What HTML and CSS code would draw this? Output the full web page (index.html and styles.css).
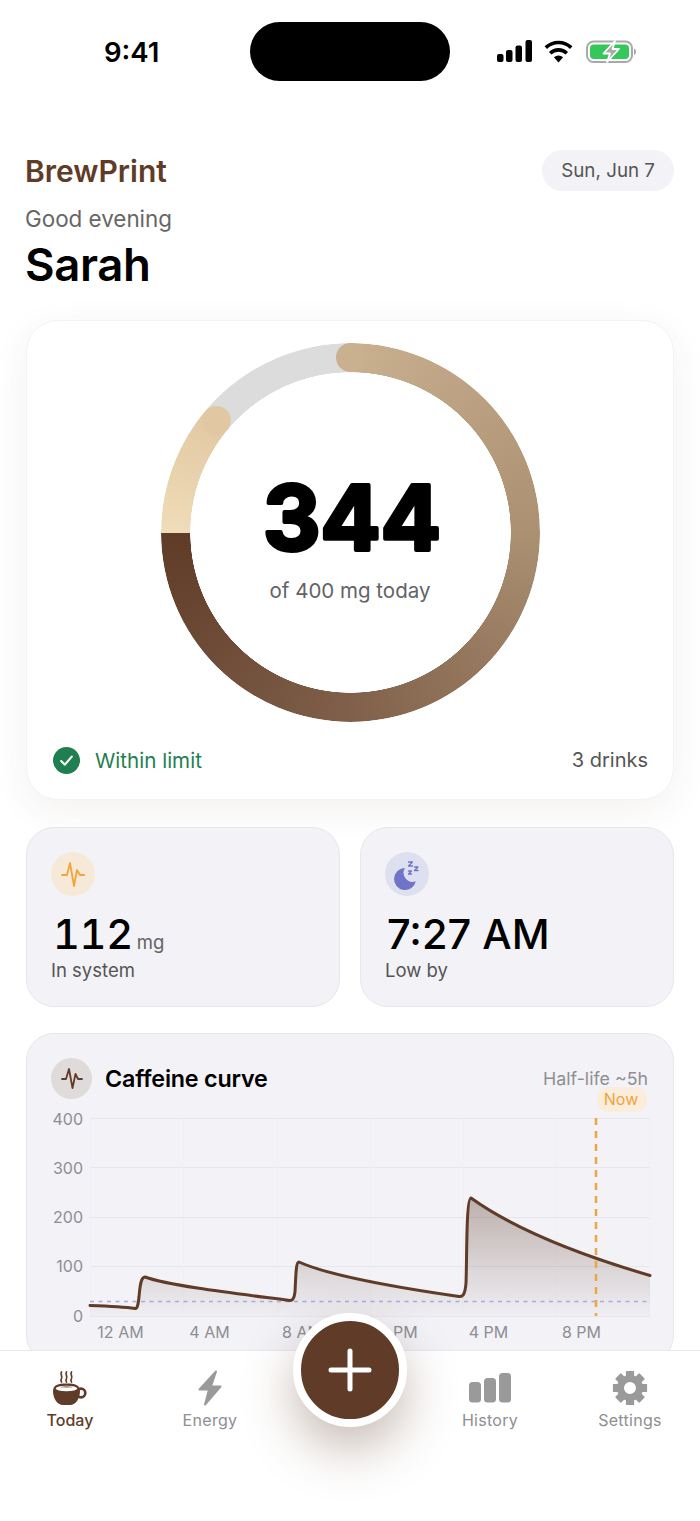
FILE: index.html
```html
<!DOCTYPE html>
<html lang="en">
<head>
<meta charset="utf-8">
<title>BrewPrint</title>
<link rel="stylesheet" href="styles.css">
</head>
<body>
<div class="phone">
  <main class="screen">
    <div class="status">
      <span class="time">9:41</span>
      <span class="island"></span>
      <svg class="status-icons" width="140" height="24" viewBox="496 40 140 24">
        <g fill="#000">
          <rect x="497" y="54" width="6.5" height="8" rx="2"/>
          <rect x="506" y="50" width="6.5" height="12" rx="2"/>
          <rect x="515.5" y="45.5" width="6.5" height="16.5" rx="2"/>
          <rect x="525.5" y="40" width="6.5" height="22" rx="2"/>
          <path d="M558.5 62.5l-4.6-5.2a7 7 0 0 1 9.2 0z"/>
        </g>
        <g fill="none" stroke="#000" stroke-width="3.6">
          <path d="M550.2 53.2a12 12 0 0 1 16.6 0"/>
          <path d="M545.8 47.6a18.4 18.4 0 0 1 25.4 0"/>
        </g>
        <rect x="587" y="41.5" width="45" height="20.5" rx="6.5" fill="#fff" stroke="#a9a9a9" stroke-width="2"/>
        <rect x="590" y="44.5" width="39" height="14.5" rx="4" fill="#34c759"/>
        <path d="M634 48.5c1.6.4 2 1.700 2 3.200s-.4 2.800-2 3.200z" fill="#a9a9a9"/>
        <path d="M615 41l-11.500 12.500h6.500l-3 8.500 12-13h-6.500z" fill="#a9a9a9" stroke="#fff" stroke-width="1.800" stroke-linejoin="round"/>
      </svg>
    </div>

    <header class="top">
      <div class="top-row">
        <span class="brand">BrewPrint</span>
        <span class="date">Sun, Jun 7</span>
      </div>
      <p class="greet">Good evening</p>
      <h1 class="name">Sarah</h1>
    </header>

    <section class="card hero">
      <div class="ring-wrap">
        <div class="ring"></div>
        <span class="cap cap-tan"></span>
        <span class="cap cap-cream"></span>
        <div class="ring-center">
          <svg class="total-svg" width="240" height="100" viewBox="0 0 240 100">
            <text class="total" x="122" y="82" text-anchor="middle">344</text>
          </svg>
          <span class="total-sub">of 400 mg today</span>
        </div>
      </div>
      <div class="hero-foot">
        <span class="limit">
          <svg class="check" width="27" height="27" viewBox="0 0 28 28">
            <circle cx="14" cy="14" r="14" fill="#1f7f50"/>
            <path d="M8.500 14.500l3.800 3.800 7.200-8.300" fill="none" stroke="#fff" stroke-width="2.200" stroke-linecap="round" stroke-linejoin="round"/>
          </svg>
          Within limit
        </span>
        <span class="drinks">3 drinks</span>
      </div>
    </section>

    <section class="stats">
      <article class="stat">
        <span class="badge badge-orange">
          <svg width="44" height="44" viewBox="51 852 44 44">
            <path d="M62 875h5l3-12 4 23 3-16 3 5h4" fill="none" stroke="#f2a33a" stroke-width="1.800" stroke-linecap="round" stroke-linejoin="round"/>
          </svg>
        </span>
        <div class="value value-num">112<small class="unit">mg</small></div>
        <div class="label">In system</div>
      </article>
      <article class="stat">
        <span class="badge badge-indigo">
          <svg width="44" height="44" viewBox="385 852 44 44">
            <path d="M405 868a11 11 0 1 0 10.800 13.200a9 9 0 0 1-10.800-13.200z" fill="#6f74c7"/>
            <path d="M408.500 862h4l-4 4h4M414.500 867h3.500l-3.500 3.500h3.500M408.500 871h3l-3 3h3" fill="none" stroke="#6f74c7" stroke-width="1.300" stroke-linecap="round" stroke-linejoin="round"/>
          </svg>
        </span>
        <div class="value">7:27 AM</div>
        <div class="label">Low by</div>
      </article>
    </section>

    <section class="chart-card">
      <div class="chart-head">
        <span class="badge-small">
          <svg width="41" height="41" viewBox="51 1058 41 41">
            <path d="M62 1079h4l3-10 3.500 19 3-14 2.500 5h4" fill="none" stroke="#5f3b28" stroke-width="1.800" stroke-linecap="round" stroke-linejoin="round"/>
          </svg>
        </span>
        <span class="chart-title">Caffeine curve</span>
        <span class="half">Half-life ~5h</span>
      </div>
      <svg class="chart" width="646" height="252" viewBox="27 1100 646 252">
        <defs>
          <linearGradient id="area" gradientUnits="userSpaceOnUse" x1="0" y1="1198" x2="0" y2="1316">
            <stop offset="0" stop-color="#5f3b28" stop-opacity=".36"/>
            <stop offset="1" stop-color="#5f3b28" stop-opacity=".02"/>
          </linearGradient>
        </defs>
        <g stroke="#e6e6ec" stroke-width="1">
          <path d="M90 1118.500H650M90 1167.500H650M90 1217.500H650M90 1266.500H650M90 1316.500H650"/>
        </g>
        <g stroke="#ececf1" stroke-width="1" stroke-dasharray="2 2">
          <path d="M90.500 1118V1316M183.500 1118V1316M277.500 1118V1316M370.500 1118V1316M463.500 1118V1316M556.500 1118V1316M649.500 1118V1316"/>
        </g>
        <path d="M90 1305.500C105 1306 125 1307 135 1308.500C137 1309 138 1306 139 1297C140 1285 141 1277 145 1277C170 1286 240 1294 290 1300.500C292 1300.500 294 1300 295 1292C296 1272 296 1262 299 1262C330 1276 400 1288 459 1296.500C462 1297 465 1296 466 1283C467 1260 466 1198 471 1198C510 1226 570 1252 650 1275.500V1316H90Z" fill="url(#area)"/>
        <path d="M90 1301.500H650" stroke="#aca7e2" stroke-width="1.500" stroke-dasharray="4 4.500" fill="none"/>
        <path d="M90 1305.500C105 1306 125 1307 135 1308.500C137 1309 138 1306 139 1297C140 1285 141 1277 145 1277C170 1286 240 1294 290 1300.500C292 1300.500 294 1300 295 1292C296 1272 296 1262 299 1262C330 1276 400 1288 459 1296.500C462 1297 465 1296 466 1283C467 1260 466 1198 471 1198C510 1226 570 1252 650 1275.500" fill="none" stroke="#5f3b28" stroke-width="3" stroke-linecap="round" stroke-linejoin="round"/>
        <path d="M596 1118V1316" stroke="#f0a540" stroke-width="2.500" stroke-dasharray="7 6" fill="none"/>
        <rect x="597" y="1087" width="50" height="25" rx="11" fill="#fbeddc"/>
        <text class="now" x="621" y="1105" text-anchor="middle">Now</text>
        <g class="axis-y" text-anchor="end">
          <text x="83" y="1124.500">400</text>
          <text x="83" y="1173.500">300</text>
          <text x="83" y="1223">200</text>
          <text x="83" y="1272">100</text>
          <text x="83" y="1321.500">0</text>
        </g>
        <g class="axis-x" text-anchor="middle">
          <text x="120.500" y="1337.500">12 AM</text>
          <text x="209.500" y="1337.500">4 AM</text>
          <text x="302" y="1337.500">8 AM</text>
          <text x="395" y="1337.500">12 PM</text>
          <text x="488.500" y="1337.500">4 PM</text>
          <text x="581.500" y="1337.500">8 PM</text>
        </g>
      </svg>
    </section>
  </main>

  <nav class="tabs">
    <button class="fab" aria-label="Add drink">
      <svg width="44" height="44" viewBox="0 0 44 44"><path d="M22 3V41M3 22H41" stroke="#fff" stroke-width="5" stroke-linecap="round"/></svg>
    </button>
    <div class="tab tab-active">
      <svg width="36" height="36" viewBox="52 1370 36 36">
        <g fill="none" stroke="#5f3b28" stroke-width="1.700" stroke-linecap="round">
          <path d="M61.500 1372c-2 2.500 2 4-.3 7.500c-.6 1 0 2 .3 2.500"/>
          <path d="M66.500 1372c-2 2.500 2 4-.3 7.500c-.6 1 0 2 .3 2.500"/>
          <path d="M71.500 1372c-2 2.500 2 4-.3 7.500c-.6 1 0 2 .3 2.500"/>
        </g>
        <path d="M53 1391C53 1385 58 1383.500 66.500 1383.500C75 1383.500 80 1385 80 1391C80 1398 76 1405 70 1405H63C57 1405 53 1398 53 1391Z" fill="#5f3b28"/>
        <circle cx="81" cy="1393" r="4.300" fill="none" stroke="#5f3b28" stroke-width="2.700"/>
        <ellipse cx="66.500" cy="1388.500" rx="10.800" ry="2.800" fill="#fff"/>
        <path d="M60 1387.500q3-1.500 6.500-1q3.500-.5 6.500 1q-3-.5-6.500 0q-3.500-.5-6.500 0z" fill="#5f3b28"/>
      </svg>
      <span>Today</span>
    </div>
    <div class="tab">
      <svg width="36" height="36" viewBox="192 1370 36 36">
        <path d="M216 1371.500L199.500 1389.500H209L205 1404.500L220.500 1386.500H211Z" fill="#9a9a9a" stroke="#9a9a9a" stroke-width="2" stroke-linejoin="round"/>
      </svg>
      <span>Energy</span>
    </div>
    <div class="tab tab-spacer"></div>
    <div class="tab">
      <svg width="44" height="36" viewBox="468 1370 44 36">
        <rect x="469" y="1382" width="12" height="20.500" rx="3.500" fill="#9a9a9a"/>
        <rect x="484" y="1378" width="12" height="24.500" rx="3.500" fill="#9a9a9a"/>
        <rect x="499" y="1373" width="12" height="29.500" rx="3.500" fill="#9a9a9a"/>
      </svg>
      <span>History</span>
    </div>
    <div class="tab">
      <svg width="36" height="36" viewBox="-18 -18 36 36">
        <g fill="#9a9a9a" stroke="#9a9a9a" stroke-width="1.200" stroke-linejoin="round">
          <rect x="-3.500" y="-16.500" width="7" height="8"/>
          <rect x="-3.500" y="-16.500" width="7" height="8" transform="rotate(45)"/>
          <rect x="-3.500" y="-16.500" width="7" height="8" transform="rotate(90)"/>
          <rect x="-3.500" y="-16.500" width="7" height="8" transform="rotate(135)"/>
          <rect x="-3.500" y="-16.500" width="7" height="8" transform="rotate(180)"/>
          <rect x="-3.500" y="-16.500" width="7" height="8" transform="rotate(225)"/>
          <rect x="-3.500" y="-16.500" width="7" height="8" transform="rotate(270)"/>
          <rect x="-3.500" y="-16.500" width="7" height="8" transform="rotate(315)"/>
        </g>
        <circle r="9.500" fill="none" stroke="#9a9a9a" stroke-width="7"/>
      </svg>
      <span>Settings</span>
    </div>
  </nav>
</div>
</body>
</html>
```

FILE: styles.css
```css
* { box-sizing: border-box; }
html, body { margin: 0; padding: 0; background: #fff; }
body { font-family: "Inter", "Liberation Sans", sans-serif; color: #000; }
.phone { width: 700px; height: 1521px; display: flex; flex-direction: column; overflow: hidden; background: #fff; }
.screen { flex: 1; min-height: 0; overflow: hidden; padding: 0 26px; display: flex; flex-direction: column; }

.status { flex: none; height: 128px; margin: 0 -26px; padding-top: 22px; display: grid; grid-template-columns: 1fr 200px 1fr; align-items: start; }
.time { justify-self: start; margin-left: 104px; margin-top: 13px; font-size: 27.500px; line-height: 34px; font-weight: 600; }
.island { height: 59px; border-radius: 30px; background: #000; }
.status-icons { justify-self: end; margin-top: 18px; margin-right: 64px; }

.top { flex: none; padding-top: 22px; }
.top-row { display: flex; justify-content: space-between; align-items: center; height: 41px; }
.brand { margin-left: -1px; font-size: 30px; font-weight: 600; color: #5f3b28; }
.date { height: 41px; line-height: 41px; padding: 0 19px; border-radius: 21px; background: #f2f2f7; color: #555; font-size: 18.800px; }
.greet { margin: 14px 0 0 -1px; font-size: 22.400px; line-height: 28px; color: #666; }
.name { margin: 5px 0 0 -1px; font-size: 45.500px; line-height: 54px; font-weight: 600; letter-spacing: -.4px; }

.card { flex: none; margin-top: 28px; background: #fff; border: 1px solid #f3f3f5; border-radius: 32px; box-shadow: 0 10px 36px rgba(95, 59, 40, .07); }
.hero { height: 480px; padding: 22px 25px 0; display: flex; flex-direction: column; }
.ring-wrap { position: relative; width: 379px; height: 379px; align-self: center; }
.ring { width: 100%; height: 100%; border-radius: 50%;
  background: conic-gradient(#c9b08f 0deg, #ab9072 90deg, #80604a 180deg, #5f3b28 270deg, #efdcb8 270deg, #e1c8a2 310deg, #dcdcdc 310deg, #dcdcdc 360deg);
  -webkit-mask: radial-gradient(closest-side, transparent calc(100% - 29.5px), #000 calc(100% - 29px));
  mask: radial-gradient(closest-side, transparent calc(100% - 29.5px), #000 calc(100% - 29px)); }
.cap { position: absolute; width: 29px; height: 29px; border-radius: 50%; }
.cap-tan { left: 175px; top: 0; background: #c9b08f; }
.cap-cream { left: 41px; top: 62.500px; background: #e1c8a2; }
.ring-center { position: absolute; inset: 0; padding-top: 125px; display: flex; flex-direction: column; align-items: center; }
.total-svg { display: block; flex: none; overflow: visible; }
.total { font-family: "Inter", "Liberation Sans", sans-serif; font-size: 89px; font-weight: 700; fill: #000; stroke: #000; stroke-width: 4px; stroke-linejoin: round; }
.total-sub { margin-top: 10px; font-size: 20.500px; line-height: 26px; color: #636366; }

.hero-foot { margin-top: 24px; height: 28px; display: flex; justify-content: space-between; align-items: center; }
.limit { display: flex; align-items: center; gap: 15px; margin-left: 1px; font-size: 20.600px; color: #1f7f50; }
.check { flex: none; }
.drinks { font-size: 20px; color: #555; }

.stats { flex: none; margin-top: 27px; display: grid; grid-template-columns: 1fr 1fr; gap: 20px; }
.stat { height: 180px; padding: 24px 24px 0; background: #f2f2f7; border: 1px solid #e6e6eb; border-radius: 28px; }
.badge { display: block; width: 44px; height: 44px; border-radius: 50%; }
.badge svg, .badge-small svg { display: block; }
.badge-orange { background: #f7e9d8; }
.badge-indigo { background: #dfe0ef; }
.value { margin-top: 13px; margin-left: 2px; font-size: 41.500px; line-height: 50px; font-weight: 500; }
.value-num { font-feature-settings: "tnum"; letter-spacing: -.3px; }
.unit { margin-left: 4px; font-size: 18.500px; line-height: 1; font-weight: 400; letter-spacing: 0; color: #636366; }
.label { margin-top: -1px; font-size: 18.500px; line-height: 24px; color: #555; }

.chart-card { flex: none; margin-top: 26px; height: 330px; padding: 24px 0 0; background: #f2f2f7; border: 1px solid #e6e6eb; border-radius: 28px; }
.chart-head { display: flex; align-items: center; height: 41px; padding: 0 25px 0 24px; }
.badge-small { flex: none; width: 41px; height: 41px; border-radius: 50%; background: #dfdbda; }
.chart-title { margin-left: 13px; font-size: 23.300px; font-weight: 600; letter-spacing: -.2px; }
.half { margin-left: auto; font-size: 17.800px; color: #8e8e93; }
.chart { display: block; margin-top: 1px; overflow: visible; }
.chart text { font-family: "Inter", "Liberation Sans", sans-serif; }
.axis-y, .axis-x { font-size: 16px; fill: #8e8e93; }
.now { font-size: 16px; fill: #f0a33c; }

.tabs { position: relative; flex: none; height: 171px; padding-top: 19px; display: grid; grid-template-columns: repeat(5, 1fr); align-items: start; background: #fff; border-top: 1px solid #e8e8ec; }
.tab { display: flex; flex-direction: column; align-items: center; font-size: 16px; color: #8e8e93; letter-spacing: .3px; }
.tab svg { display: block; flex: none; }
.tab span { margin-top: 2px; line-height: 24px; }
.tab-active { color: #5f3b28; font-weight: 500; letter-spacing: 0; }
.fab { position: absolute; left: 293px; top: -38px; z-index: 2; width: 114px; height: 114px; padding: 0; border: 8px solid #fff; border-radius: 50%; background: #5f3b28; display: flex; align-items: center; justify-content: center; box-shadow: 0 22px 50px rgba(95, 59, 40, .34); }
```
